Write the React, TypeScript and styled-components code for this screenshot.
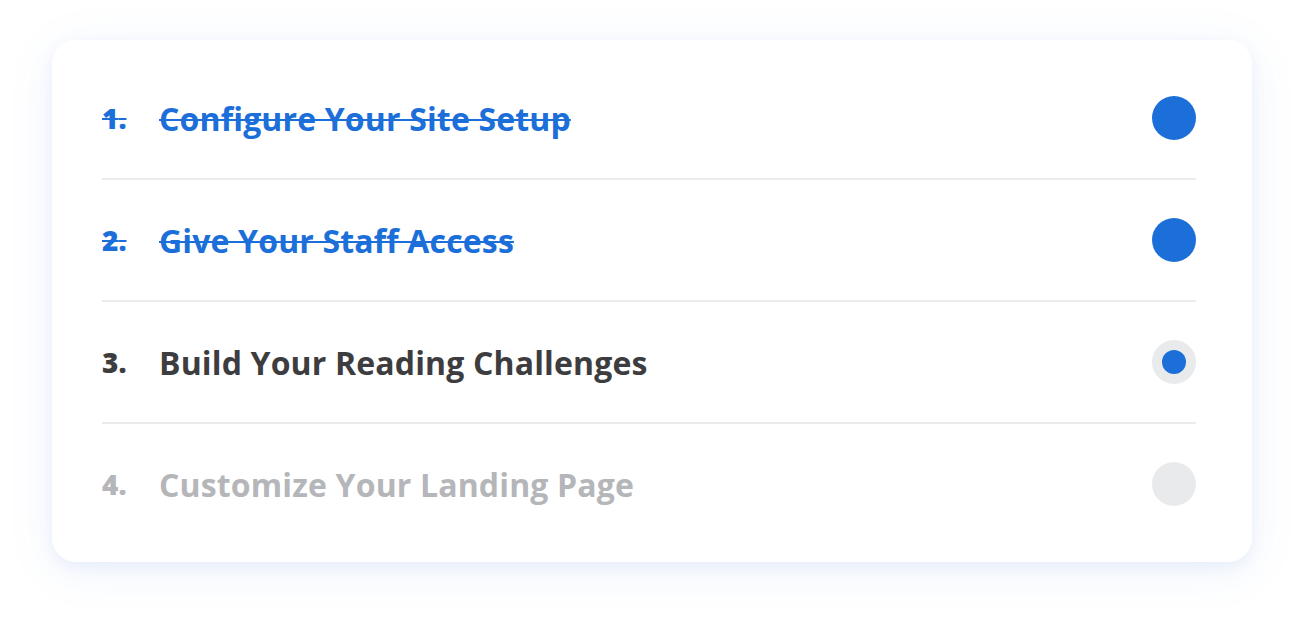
import React from "react";
import styled, { createGlobalStyle } from "styled-components";

const Global = createGlobalStyle`
  html, body { margin: 0; padding: 0; background: #ffffff; }
  body { font-family: "Open Sans", "Noto Sans", sans-serif; }
`;

const Page = styled.div`
  width: 1304px;
  height: 626px;
  box-sizing: border-box;
  padding: 40px 52px;
  background: #ffffff;
`;

const Card = styled.div`
  width: 1200px;
  height: 522px;
  box-sizing: border-box;
  padding: 18px 56px 18px 50px;
  background: #ffffff;
  border-radius: 24px;
  box-shadow: 0 6px 16px rgba(40, 100, 210, 0.07), 0 8px 50px rgba(60, 120, 220, 0.08);
  display: flex;
  flex-direction: column;
`;

type Status = "done" | "current" | "todo";

const Row = styled.div<{ $last: boolean }>`
  height: 120px;
  display: flex;
  align-items: center;
  border-bottom: ${(p) => (p.$last ? "none" : "2px solid #ebebeb")};
  flex-shrink: 0;
`;

const colorFor = (s: Status) =>
  s === "done" ? "#1c6fd9" : s === "current" ? "#3d3d3f" : "#b5b6b9";

const Num = styled.span<{ $status: Status }>`
  width: 57px;
  flex-shrink: 0;
  font-size: 28px;
  font-weight: 800;
  color: ${(p) => colorFor(p.$status)};
  text-decoration: ${(p) => (p.$status === "done" ? "line-through" : "none")};
  text-decoration-thickness: 2px;
`;

const Title = styled.span<{ $status: Status }>`
  flex: 1;
  font-size: 32px;
  font-weight: 700;
  letter-spacing: 0.15px;
  color: ${(p) => colorFor(p.$status)};
  text-decoration: ${(p) => (p.$status === "done" ? "line-through" : "none")};
  text-decoration-thickness: 2px;
`;

const Dot = styled.div<{ $status: Status }>`
  width: 44px;
  height: 44px;
  border-radius: 50%;
  flex-shrink: 0;
  display: flex;
  align-items: center;
  justify-content: center;
  background: ${(p) => (p.$status === "done" ? "#1c6fd9" : "#e9eaec")};
`;

const Inner = styled.div`
  width: 24px;
  height: 24px;
  border-radius: 50%;
  background: #1c6fd9;
`;

const steps: { title: string; status: Status }[] = [
  { title: "Configure Your Site Setup", status: "done" },
  { title: "Give Your Staff Access", status: "done" },
  { title: "Build Your Reading Challenges", status: "current" },
  { title: "Customize Your Landing Page", status: "todo" },
];

export default function App() {
  return (
    <Page>
      <Global />
      <Card>
        {steps.map((s, i) => (
          <Row key={s.title} $last={i === steps.length - 1}>
            <Num $status={s.status}>{i + 1}.</Num>
            <Title $status={s.status}>{s.title}</Title>
            <Dot $status={s.status}>{s.status === "current" && <Inner />}</Dot>
          </Row>
        ))}
      </Card>
    </Page>
  );
}
